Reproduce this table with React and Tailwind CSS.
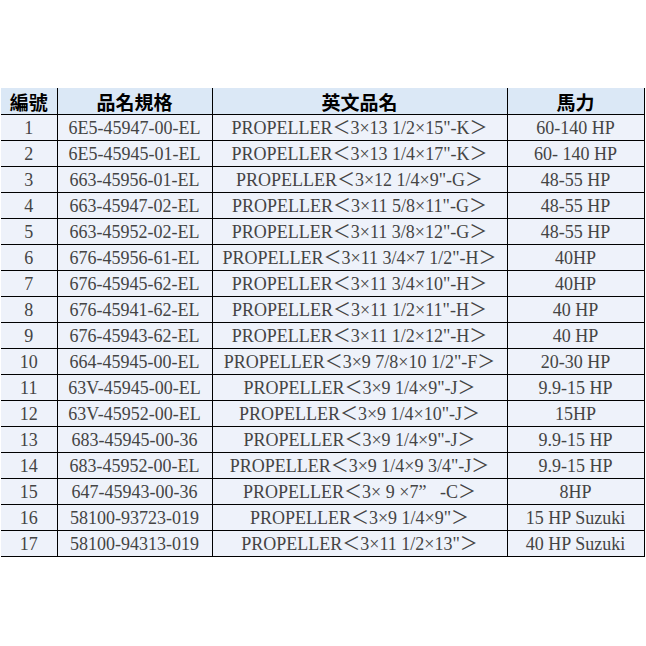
const rows = [
  ['1', '6E5-45947-00-EL', 'PROPELLER＜3×13 1/2×15"-K＞', '60-140 HP'],
  ['2', '6E5-45945-01-EL', 'PROPELLER＜3×13 1/4×17"-K＞', '60- 140 HP'],
  ['3', '663-45956-01-EL', 'PROPELLER＜3×12 1/4×9"-G＞', '48-55 HP'],
  ['4', '663-45947-02-EL', 'PROPELLER＜3×11 5/8×11"-G＞', '48-55 HP'],
  ['5', '663-45952-02-EL', 'PROPELLER＜3×11 3/8×12"-G＞', '48-55 HP'],
  ['6', '676-45956-61-EL', 'PROPELLER＜3×11 3/4×7 1/2"-H＞', '40HP'],
  ['7', '676-45945-62-EL', 'PROPELLER＜3×11 3/4×10"-H＞', '40HP'],
  ['8', '676-45941-62-EL', 'PROPELLER＜3×11 1/2×11"-H＞', '40 HP'],
  ['9', '676-45943-62-EL', 'PROPELLER＜3×11 1/2×12"-H＞', '40 HP'],
  ['10', '664-45945-00-EL', 'PROPELLER＜3×9 7/8×10 1/2"-F＞', '20-30 HP'],
  ['11', '63V-45945-00-EL', 'PROPELLER＜3×9 1/4×9"-J＞', '9.9-15 HP'],
  ['12', '63V-45952-00-EL', 'PROPELLER＜3×9 1/4×10"-J＞', '15HP'],
  ['13', '683-45945-00-36', 'PROPELLER＜3×9 1/4×9"-J＞', '9.9-15 HP'],
  ['14', '683-45952-00-EL', 'PROPELLER＜3×9 1/4×9 3/4"-J＞', '9.9-15 HP'],
  ['15', '647-45943-00-36', 'PROPELLER＜3× 9 ×7”\u00a0\u00a0\u00a0-C＞', '8HP'],
  ['16', '58100-93723-019', 'PROPELLER＜3×9 1/4×9"＞', '15 HP Suzuki'],
  ['17', '58100-94313-019', 'PROPELLER＜3×11 1/2×13"＞', '40 HP Suzuki'],
]

const headers = ['編號', '品名規格', '英文品名', '馬力']

export default function App() {
  return (
    <div className="w-[646px] h-[646px] bg-white pt-[88px] pl-[1px]">
      <table className="border-collapse table-fixed w-[643px] font-['Liberation_Serif','Noto_Sans_CJK_TC',serif]">
        <colgroup>
          <col className="w-[56px]" />
          <col className="w-[155px]" />
          <col className="w-[295px]" />
          <col className="w-[137px]" />
        </colgroup>
        <thead>
          <tr className="h-[26px] bg-[#dbe8f6] border-b border-black">
            {headers.map((h, i) => (
              <th
                key={h}
                className={`p-0 pt-[1px] text-center text-[19px] leading-none font-bold text-black font-['Noto_Sans_CJK_TC',sans-serif] ${i > 0 ? 'border-l border-black' : ''} ${i === 3 ? 'border-r' : ''}`}
              >
                {h}
              </th>
            ))}
          </tr>
        </thead>
        <tbody>
          {rows.map((r) => (
            <tr key={r[0]} className="h-[26px] bg-[#eef2fa] border-b border-black">
              {r.map((c, i) => (
                <td
                  key={i}
                  className={`p-0 pt-[2px] text-center text-[18px] leading-none text-[#444444] whitespace-nowrap ${i > 0 ? 'border-l border-black' : ''} ${i === 3 ? 'border-r' : ''}`}
                >
                  {c}
                </td>
              ))}
            </tr>
          ))}
        </tbody>
      </table>
    </div>
  )
}
